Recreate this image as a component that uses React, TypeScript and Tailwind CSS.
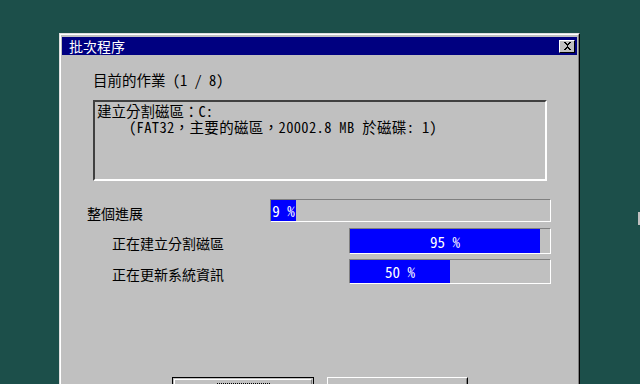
import { ReactNode } from "react";

const font = "font-['Noto_Sans_Mono_CJK_TC','Noto_Sans_CJK_TC','Liberation_Mono',monospace]";

function Bar({ pct, width, height, label }: { pct: number; width: number; height: number; label: string }) {
  return (
    <div
      className="flex border-t border-l border-t-[#808080] border-l-[#808080] border-b border-r border-b-white border-r-white bg-[#c0c0c0]"
      style={{ width, height }}
    >
      <div
        className="flex h-full items-center justify-center bg-[#0000ff] text-[15px] leading-none text-white whitespace-nowrap"
        style={{ width: `${pct}%` }}
      >
        {label}
      </div>
    </div>
  );
}

function Row({ label, indent, children, mt }: { label: string; indent: string; children: ReactNode; mt: string }) {
  return (
    <div className={`flex items-center justify-between pr-[26px] ${mt}`}>
      <span className={`${indent} pt-[4px] text-[14px] leading-[16px]`}>{label}</span>
      {children}
    </div>
  );
}

export default function App() {
  return (
    <div className={`relative h-[384px] w-[640px] overflow-hidden bg-[#1c4f4a] pl-[59px] pt-[33px] text-black ${font}`}>
      {/* another window peeking in from the right */}
      <div className="absolute right-0 top-[212px] h-[13px] w-[2px] bg-[#c0c0c0]" />

      <div className="h-[380px] w-[521px] border border-t-[#dfdfdf] border-l-[#dfdfdf] border-b-black border-r-black">
        <div className="h-full border border-t-white border-l-white border-b-[#808080] border-r-[#808080] bg-[#c0c0c0] p-[1px] pt-[2px]">
          {/* title bar */}
          <div className="flex h-[18px] items-center justify-between bg-[#000080] pl-[7px] pr-[2px]">
            <span className="text-[14px] leading-[16px] text-white">批次程序</span>
            <div className="flex h-[13px] w-[16px] items-center justify-center border border-t-white border-l-white border-b-black border-r-black bg-[#c0c0c0]">
              <svg width="9" height="8" viewBox="0 0 9 8">
                <path d="M1 0h2v1h1v1h1V1h1V0h2v1H7v1H6v1H5v2h1v1h1v1h1v1H6V7H5V6H4v1H3v1H1V7h1V6h1V5h1V3H3V2H2V1H1z" fill="#000" />
              </svg>
            </div>
          </div>

          {/* body */}
          <div className="pl-[25px] pt-[17px]">
            <div className="ml-[6px] h-[16px] text-[14.5px] leading-[16px]">目前的作業 (1 / 8)</div>

            <div className="ml-[6px] mt-[12px] h-[81px] w-[454px] border-2 border-t-[#404040] border-l-[#404040] border-b-white border-r-white bg-[#c0c0c0] pl-[2px] pt-[1px] text-[14.5px] leading-[16px]">
              <div className="h-[16px]">建立分割磁區：C:</div>
              <div className="h-[16px] pl-[32px] tracking-[0.35px]">(FAT32，主要的磁區，20002.8 MB 於磁碟: 1)</div>
            </div>

            <Row label="整個進展" indent="" mt="mt-[18px]">
              <Bar pct={9} width={281} height={23} label="9 %" />
            </Row>
            <Row label="正在建立分割磁區" indent="pl-[25px]" mt="mt-[6px]">
              <Bar pct={95} width={202} height={26} label="95 %" />
            </Row>
            <Row label="正在更新系統資訊" indent="pl-[25px]" mt="mt-[5px]">
              <Bar pct={50} width={202} height={25} label="50 %" />
            </Row>

            <div className="mt-[93px] flex gap-[13px] pl-[85px]">
              <div className="h-[24px] w-[142px] border border-black p-[1px]">
                <div className="flex h-full justify-center border border-t-white border-l-white border-b-[#808080] border-r-[#808080] pt-[3px]">
                  <div className="h-[16px] w-[53px] border border-dotted border-black" />
                </div>
              </div>
              <div className="h-[24px] w-[141px] border border-t-white border-l-white border-b-black border-r-black">
                <div className="h-full border border-transparent border-b-[#808080] border-r-[#808080]" />
              </div>
            </div>
          </div>
        </div>
      </div>
    </div>
  );
}
